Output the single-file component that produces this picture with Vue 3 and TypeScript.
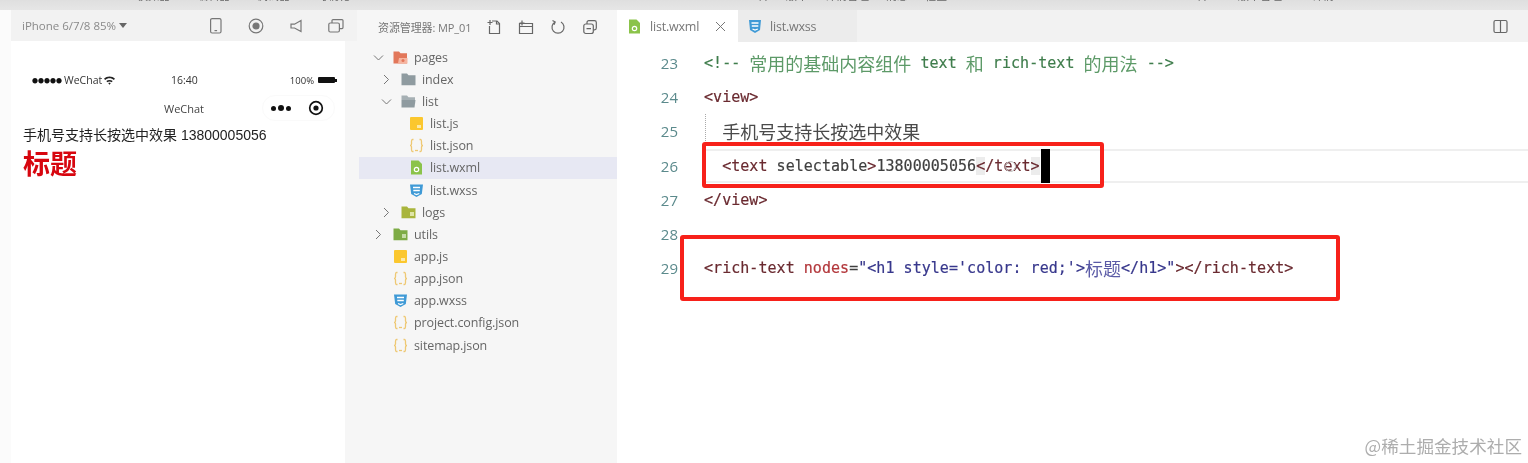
<script setup lang="ts">
interface TreeRow { name: string; depth: number; chevron?: 'open' | 'closed'; icon: string; selected?: boolean }
interface Token { t: string; c: string }
interface CodeLine { n: number; tokens: Token[]; indent?: boolean; active?: boolean }

const labelsA = ['模拟器', '编辑器', '调试器', '可视化']
const labelsB = ['上传', '版本', '详情管理', '消息', '社区']
const labelsC = ['上传', '版本管理', '详情']

const tree: TreeRow[] = [
  { name: 'pages', depth: 0, chevron: 'open', icon: 'pages' },
  { name: 'index', depth: 1, chevron: 'closed', icon: 'folder' },
  { name: 'list', depth: 1, chevron: 'open', icon: 'folderOpen' },
  { name: 'list.js', depth: 2, icon: 'js' },
  { name: 'list.json', depth: 2, icon: 'json' },
  { name: 'list.wxml', depth: 2, icon: 'wxml', selected: true },
  { name: 'list.wxss', depth: 2, icon: 'wxss' },
  { name: 'logs', depth: 1, chevron: 'closed', icon: 'logs' },
  { name: 'utils', depth: 0, chevron: 'closed', icon: 'utils' },
  { name: 'app.js', depth: 0, icon: 'js' },
  { name: 'app.json', depth: 0, icon: 'json' },
  { name: 'app.wxss', depth: 0, icon: 'wxss' },
  { name: 'project.config.json', depth: 0, icon: 'json' },
  { name: 'sitemap.json', depth: 0, icon: 'json' },
]

const code: CodeLine[] = [
  { n: 23, tokens: [
    { t: '<!-- ', c: 'comment' }, { t: '常用的基础内容组件', c: 'comment cjk' }, { t: ' text ', c: 'comment' },
    { t: '和', c: 'comment cjk' }, { t: ' rich-text ', c: 'comment' }, { t: '的用法', c: 'comment cjk' }, { t: ' -->', c: 'comment' },
  ] },
  { n: 24, tokens: [{ t: '<view>', c: 'tag' }] },
  { n: 25, indent: true, tokens: [{ t: '  ', c: 'plain' }, { t: '手机号支持长按选中效果', c: 'plain cjk' }] },
  { n: 26, active: true, tokens: [
    { t: '  <text ', c: 'tag' }, { t: 'selectable', c: 'plain' }, { t: '>', c: 'tag' }, { t: '13800005056', c: 'plain' },
    { t: '<', c: 'tag bracket' }, { t: '/text', c: 'tag' }, { t: '>', c: 'tag bracket' },
  ] },
  { n: 27, tokens: [{ t: '</view>', c: 'tag' }] },
  { n: 28, tokens: [] },
  { n: 29, tokens: [
    { t: '<rich-text ', c: 'tag' }, { t: 'nodes', c: 'attr' }, { t: '=', c: 'plain' },
    { t: '"<h1 style=\'color: red;\'>', c: 'str' }, { t: '标题', c: 'str cjk' }, { t: '</h1>"', c: 'str' }, { t: '></rich-text>', c: 'tag' },
  ] },
]
</script>

<template>
  <div class="root">
    <div class="top">
      <div class="labels a"><span v-for="l in labelsA" :key="l">{{ l }}</span></div>
      <div class="labels b"><span v-for="l in labelsB" :key="l">{{ l }}</span></div>
      <div class="labels c"><span v-for="l in labelsC" :key="l">{{ l }}</span></div>
    </div>
    <div class="main">
      <section class="sim">
        <div class="sim-bar">
          <span class="device">iPhone 6/7/8 85% <i class="caret-down"></i></span>
          <div class="sim-icons">
            <svg width="16" height="18" viewBox="0 0 16 18" fill="none" stroke="#777" stroke-width="1.2"><rect x="2.6" y="1.6" width="10.4" height="14.4" rx="1.5"/><path d="M6.5 13.6h2.6"/></svg>
            <svg width="18" height="18" viewBox="0 0 18 18" fill="none" stroke="#777" stroke-width="1.2"><circle cx="9" cy="9" r="6.8"/><circle cx="9" cy="9" r="3" fill="#777"/></svg>
            <svg width="16" height="18" viewBox="0 0 16 18" fill="none" stroke="#777" stroke-width="1.2"><path d="M13 3.5v11L6.5 11H3V7.2h3.5z"/></svg>
            <svg width="18" height="18" viewBox="0 0 18 18" fill="none" stroke="#777" stroke-width="1.2"><rect x="1.8" y="6" width="10.6" height="9" rx="1.5"/><path d="M5 6V3.6c0-.6.5-1 1-1h9c.6 0 1 .4 1 1v7c0 .6-.4 1-1 1h-2.600"/></svg>
          </div>
        </div>
        <div class="phone">
          <div class="status">
            <div class="st-left">
              <span class="dots">●●●●●</span><span>WeChat</span>
              <svg width="11" height="9" viewBox="0 0 11 9" fill="#222"><path d="M0 2.800C3-.3 8-.3 11 2.800L9.800 4C7.500 1.800 3.500 1.800 1.200 4zM2.300 5.100c1.800-1.600 4.600-1.600 6.400 0L7.600 6.200c-1.200-1-3-1-4.200 0zM4.300 7.200c.7-.5 1.700-.5 2.400 0L5.500 8.800z"/></svg>
            </div>
            <span class="st-time">16:40</span>
            <div class="st-right"><span>100%</span><i class="battery"></i><i class="nub"></i></div>
          </div>
          <div class="nav">
            <span class="nav-title">WeChat</span>
            <div class="capsule">
              <span class="cap-dots"><i></i><i class="big"></i><i></i></span>
              <svg width="16" height="16" viewBox="0 0 16 16"><circle cx="8" cy="8" r="6.300" fill="none" stroke="#111" stroke-width="1.700"/><circle cx="8" cy="8" r="2.600" fill="#111"/></svg>
            </div>
          </div>
          <div class="ph-text">手机号支持长按选中效果 13800005056</div>
          <div class="ph-h1">标题</div>
        </div>
      </section>

      <aside class="explorer">
        <div class="ex-head">
          <span class="ex-title">资源管理器: MP_01</span>
          <svg width="16" height="16" viewBox="0 0 16 16" fill="none" stroke="#666" stroke-width="1.200"><path d="M3.500 7V14.500h10V4.500L11 2H6M1.500 3.500h5M4 1v5"/><path d="M10.500 2v3h3"/></svg>
          <svg width="16" height="16" viewBox="0 0 16 16" fill="none" stroke="#666" stroke-width="1.200"><path d="M1.500 4.500h13v10h-13zM1.500 7.500h13M4 1.500v5M1.500 4h5"/></svg>
          <svg width="16" height="16" viewBox="0 0 16 16" fill="none" stroke="#666" stroke-width="1.200"><path d="M5 3a6 6 0 1 0 6 0M2.500 1.500 5.200 3 4 5.800"/></svg>
          <svg width="16" height="16" viewBox="0 0 16 16" fill="none" stroke="#666" stroke-width="1.200"><rect x="1.800" y="5" width="9.500" height="9.500" rx="2"/><path d="M5 5V3.500c0-1 .8-1.800 1.800-1.800h5.700c1 0 1.800.8 1.800 1.800V9c0 1-.8 1.800-1.800 1.800h-1.200M4.500 9.700h4.500"/></svg>
        </div>
        <div class="tree">
          <div v-for="r in tree" :key="r.name" class="row" :class="[`d${r.depth}`, { sel: r.selected }]">
            <span class="chev">
              <svg v-if="r.chevron === 'open'" width="11" height="11" viewBox="0 0 11 11" fill="none" stroke="#777" stroke-width="1"><path d="M1 3.500 5.500 8 10 3.500"/></svg>
              <svg v-else-if="r.chevron === 'closed'" width="11" height="11" viewBox="0 0 11 11" fill="none" stroke="#777" stroke-width="1"><path d="M3 1l4.500 4.500L3 10"/></svg>
            </span>
            <span class="ico">
              <svg width="15" height="15" viewBox="0 0 15 15">
                <template v-if="r.icon === 'pages'">
                  <path d="M.5 1.500h5.500l1.500 1.700H14v10.300H.5z" fill="#e2775a"/><path d="M6 8h8.500v5.500H5z" fill="#f6b5a0"/><circle cx="10" cy="10.500" r="1.500" fill="#e2775a"/>
                </template>
                <template v-else-if="r.icon === 'folder'">
                  <path d="M.5 1.500h5.500l1.500 1.700H14.500v10H.5z" fill="#8f9ba0"/>
                </template>
                <template v-else-if="r.icon === 'folderOpen'">
                  <path d="M.5 1.500h5.500l1.500 1.700H14v2.800H.5z" fill="#a6b0b4"/><path d="M.5 6h14l-1 7.500H.5z" fill="#8f9ba0"/>
                </template>
                <template v-else-if="r.icon === 'logs'">
                  <path d="M.5 1.500h5.500l1.500 1.700H14.500v10H.5z" fill="#a9b53c"/><rect x="9" y="7" width="4" height="4" fill="#dfe5a8"/>
                </template>
                <template v-else-if="r.icon === 'utils'">
                  <path d="M.5 1.500h5.500l1.500 1.700H14.500v10H.5z" fill="#7dab45"/><rect x="9" y="7" width="4" height="4" fill="#c5dca8"/>
                </template>
                <template v-else-if="r.icon === 'js'">
                  <rect x="1" y="1" width="13" height="13" rx="1" fill="#fbc72e"/><rect x="8" y="9" width="4" height="3" fill="#fde9a6"/>
                </template>
                <template v-else-if="r.icon === 'json'">
                  <path d="M4.500 1.500H3.500C2.500 1.500 2.500 2.500 2.500 3.500v2.500c0 1-.5 1.500-1.500 1.500 1 0 1.500.5 1.500 1.500v2.500c0 1 0 2 1 2h1M10.500 1.500h1c1 0 1 1 1 2v2.500c0 1 .5 1.500 1.500 1.500-1 0-1.500.5-1.500 1.500v2.500c0 1 0 2-1 2h-1" fill="none" stroke="#eec873" stroke-width="1.300"/><path d="M6 12.500h3" stroke="#eec873" stroke-width="1.300"/>
                </template>
                <template v-else-if="r.icon === 'wxml'">
                  <path d="M2 .5h7.500L13 4v10.500H2z" fill="#8bc34a"/><circle cx="7.500" cy="9.500" r="2.200" fill="none" stroke="#fff" stroke-width="1.200"/>
                </template>
                <template v-else>
                  <path d="M1 1.500h13l-1.200 9.500L7.500 14 2.200 11z" fill="#3f9ad6"/><path d="M4 4.500h7M4.300 7.500h6.500M5 10.500l2.500 1 2.800-1" fill="none" stroke="#fff" stroke-width="1.300"/>
                </template>
              </svg>
            </span>
            <span class="nm">{{ r.name }}</span>
          </div>
        </div>
      </aside>

      <section class="editor">
        <div class="tabs">
          <div class="tab on">
            <svg width="13" height="15" viewBox="0 0 13 15"><path d="M1 .5h7.500L12 4v10.500H1z" fill="#8bc34a"/><circle cx="6.500" cy="9.500" r="2.200" fill="none" stroke="#fff" stroke-width="1.200"/></svg>
            <span class="tab-name">list.wxml</span>
            <svg class="tab-x" width="11" height="11" viewBox="0 0 11 11" stroke="#777" stroke-width="1"><path d="M1 1l9 9M10 1l-9 9"/></svg>
          </div>
          <div class="tab off">
            <svg width="14" height="15" viewBox="0 0 14 15"><path d="M1 1h12l-1 10L7 14l-5-3z" fill="#3f9ad6"/><path d="M3.500 4h7M3.800 7h6.500M4.500 10l2.500 1 2.800-1" fill="none" stroke="#fff" stroke-width="1.300"/></svg>
            <span class="tab-name">list.wxss</span>
          </div>
          <div class="tab-rest">
            <svg width="15" height="15" viewBox="0 0 15 15" fill="none" stroke="#666" stroke-width="1.200"><rect x="1" y="1.500" width="13" height="12" rx="1.500"/><path d="M7.500 1.500v12"/></svg>
          </div>
        </div>
        <div class="code">
          <div v-for="l in code" :key="l.n" class="line">
            <span class="ln">{{ l.n }}</span>
            <span class="src" :class="{ guide: l.indent, active: l.active }"><span v-for="(k, i) in l.tokens" :key="i" :class="k.c">{{ k.t }}</span><i v-if="l.active" class="cursor"></i><i v-if="l.active" class="pointer"></i></span>
          </div>
          <div class="mark mark-a"></div>
          <div class="mark mark-b"></div>
        </div>
        <div class="wm">@稀土掘金技术社区</div>
      </section>
    </div>
  </div>
</template>

<style>
html, body { background: #fff; overflow: hidden; }
</style>

<style scoped>
.root { width: 1528px; height: 463px; display: flex; flex-direction: column; overflow: hidden; font-family: "Open Sans", "Noto Sans CJK SC", sans-serif; color: #555; background: #fff; filter: blur(0.5px); }
.top { height: 10px; flex: none; background: linear-gradient(#dfdfdf, #e6e6e6); display: flex; overflow: hidden; position: relative; }
.labels { display: flex; font-size: 11px; line-height: 12px; margin-top: -10px; color: #666; white-space: nowrap; }
.labels.a { margin-left: 137px; gap: 27px; }
.labels.b { margin-left: 397px; gap: 17px; }
.labels.c { margin-left: 239px; gap: 30px; }
.main { flex: 1; display: flex; min-height: 0; }
.sim { width: 357px; flex: none; background: linear-gradient(90deg, #fbfbfb 0, #fbfbfb 11px, #f6f6f6 11px); padding-left: 11px; display: flex; flex-direction: column; box-sizing: border-box; }
.sim-bar { height: 31px; flex: none; background: #f2f2f2; display: flex; align-items: center; padding-left: 11px; }
.device { font-size: 11.500px; color: #8a8a8a; width: 186px; white-space: nowrap; }
.caret-down { display: inline-block; border: 4px solid transparent; border-top: 5px solid #666; border-bottom: 0; vertical-align: 2px; }
.sim-icons { display: flex; gap: 23px; align-items: center; }
.phone { flex: 1; background: #fff; padding: 32px 0 0 12px; border-right: 12px solid #f6f6f6; display: flex; flex-direction: column; box-sizing: border-box; width: 346px; }
.status { height: 14px; display: flex; align-items: center; justify-content: space-between; padding: 0 8px 0 9px; font-size: 10.500px; color: #333; position: relative; }
.st-left { display: flex; align-items: center; gap: 2px; }
.dots { font-size: 6px; color: #111; }
.st-time { position: absolute; left: 148px; font-size: 10.500px; }
.st-right { display: flex; align-items: center; gap: 4px; font-size: 9.500px; }
.battery { width: 17px; height: 6px; background: #111; border-radius: 1px; }
.nub { width: 2px; height: 3px; background: #111; margin-left: -4px; }
.nav { height: 28px; margin-top: 7px; display: flex; align-items: center; position: relative; }
.nav-title { position: absolute; left: 141px; font-size: 11px; color: #444; }
.capsule { margin-left: 239px; width: 73px; height: 26px; border-radius: 13px; border: 1px solid #fafafa; display: flex; align-items: center; justify-content: space-between; padding: 0 10px 0 8px; box-sizing: border-box; }
.cap-dots { display: flex; align-items: center; gap: 2px; }
.cap-dots i { width: 5px; height: 5px; border-radius: 50%; background: #111; }
.cap-dots i.big { width: 6px; height: 6px; }
.ph-text { margin-top: 3px; font-family: "Liberation Sans", "Noto Sans CJK SC", sans-serif; font-size: 14px; line-height: 20px; color: #222; white-space: nowrap; }
.ph-h1 { font-family: "Noto Sans CJK SC", sans-serif; font-size: 27px; line-height: 36px; font-weight: 700; color: #d7060f; }
.explorer { width: 260px; flex: none; background: #f6f6f6; display: flex; flex-direction: column; }
.ex-head { height: 34px; flex: none; display: flex; align-items: center; padding-left: 21px; gap: 16px; }
.ex-title { font-size: 11px; color: #777; width: 92px; white-space: nowrap; letter-spacing: -0.100px; }
.tree { display: flex; flex-direction: column; padding-top: 2px; }
.row { height: 22.170px; flex: none; display: flex; align-items: center; font-size: 12.500px; color: #666; letter-spacing: -0.100px; }
.row.d0 { padding-left: 16px; }
.row.d1 { padding-left: 24px; }
.row.d2 { padding-left: 32px; }
.row.sel { background: #e7e8f3; margin-left: 2px; padding-left: 30px; }
.chev { width: 20px; flex: none; display: flex; align-items: center; }
.ico { width: 21px; flex: none; display: flex; align-items: center; }
.editor { flex: 1; display: flex; flex-direction: column; position: relative; min-width: 0; }
.tabs { height: 32px; flex: none; display: flex; background: #f2f2f2; }
.tab { display: flex; align-items: center; box-sizing: border-box; }
.tab.on { width: 121px; background: #fff; padding-left: 11px; gap: 9px; }
.tab.off { width: 119px; background: #ececec; padding-left: 10px; gap: 8px; }
.tab-name { font-size: 12.500px; color: #777; letter-spacing: -0.200px; }
.tab-x { margin-left: 7px; }
.tab-rest { flex: 1; display: flex; align-items: center; justify-content: flex-end; padding-right: 20px; }
.code { flex: 1; position: relative; padding-top: 4px; font-family: "DejaVu Sans Mono", "Noto Sans CJK SC", monospace; font-size: 15px; letter-spacing: 0.040px; -webkit-text-stroke: 0.200px; }
.line { height: 34.200px; display: flex; align-items: center; position: relative; box-sizing: border-box; white-space: pre; }
.ln { width: 61px; text-align: right; flex: none; font-family: "Open Sans", sans-serif; font-size: 15px; color: #5b8a8c; -webkit-text-stroke: 0; }
.src { margin-left: 26px; display: flex; align-items: center; height: 100%; position: relative; flex: 1; box-sizing: border-box; }
.src.active { border-top: 2px solid #efefef; border-bottom: 2px solid #efefef; }
.src.guide::before { content: ""; position: absolute; left: 1px; top: 0; bottom: 0; border-left: 1px dotted #aaa; }
.comment { color: #3f7d4c; }
.tag { color: #6a2a30; }
.plain { color: #3f3f3f; }
.attr { color: #b3383c; }
.str { color: #37378c; }
.cjk { font-size: 18px; font-weight: 400; font-family: "Noto Sans CJK SC", sans-serif; letter-spacing: 0; -webkit-text-stroke: 0; }
.comment.cjk { color: #5d9a68; }
.plain.cjk { color: #4a4a4a; }
.str.cjk { color: #5a5aa6; }
.bracket { background: #ececec; }
.cursor { display: block; flex: none; width: 9px; height: 34px; margin: -2px 0 -2px 1px; background: #000; }
.pointer { position: absolute; left: 301px; top: 10px; width: 9px; height: 9px; border: 1px solid #bbb; border-radius: 50%; }
.mark { position: absolute; border: 4px solid #f7211a; border-radius: 3px; box-sizing: border-box; pointer-events: none; }
.mark-a { left: 85px; top: 100px; width: 402px; height: 46px; }
.mark-b { left: 63px; top: 193px; width: 660px; height: 66px; }
.wm { position: absolute; right: 6px; bottom: 6px; font-family: "Noto Sans CJK SC", sans-serif; font-size: 17.600px; line-height: 22px; color: #adadad; }
</style>
